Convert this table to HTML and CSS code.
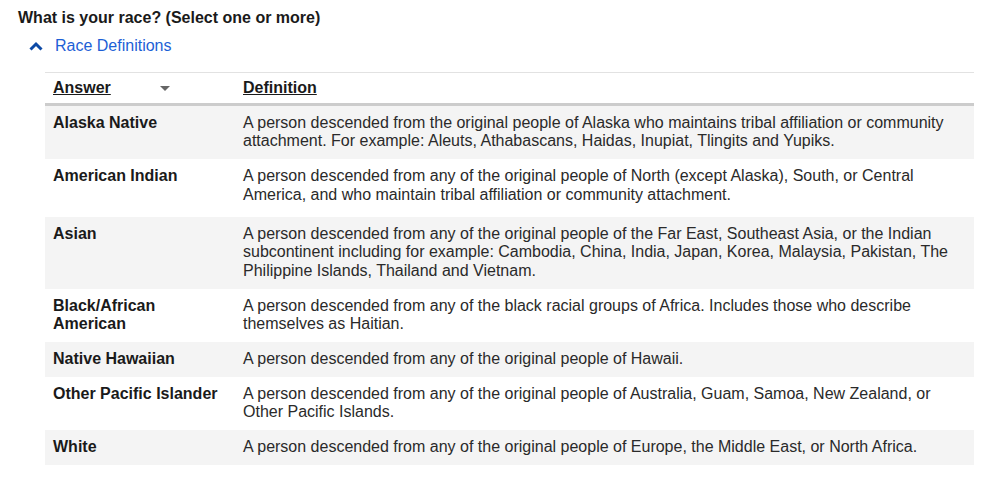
FILE: index.html
```html
<!DOCTYPE html>
<html>
<head>
<meta charset="utf-8">
<link rel="stylesheet" href="styles.css">
</head>
<body>
<div class="page">
  <h1 class="question">What is your race? (Select one or more)</h1>
  <a class="toggle" href="#">
    <svg class="chev" width="14" height="10" viewBox="0 0 14 10"><path d="M1.5 8.5 L7 3 L12.5 8.5" fill="none" stroke="#0d4aa6" stroke-width="3"/></svg>
    <span>Race Definitions</span>
  </a>
  <table class="defs">
    <thead>
      <tr>
        <th class="col-answer"><span class="hd">Answer</span><span class="sort"></span></th>
        <th class="col-def"><span class="hd">Definition</span></th>
      </tr>
    </thead>
    <tbody>
      <tr class="alt"><td class="name">Alaska Native</td><td>A person descended from the original people of Alaska who maintains tribal affiliation or community attachment. For example: Aleuts, Athabascans, Haidas, Inupiat, Tlingits and Yupiks.</td></tr>
      <tr class="tall"><td class="name">American Indian</td><td>A person descended from any of the original people of North (except Alaska), South, or Central America, and who maintain tribal affiliation or community attachment.</td></tr>
      <tr class="alt"><td class="name">Asian</td><td>A person descended from any of the original people of the Far East, Southeast Asia, or the Indian subcontinent including for example: Cambodia, China, India, Japan, Korea, Malaysia, Pakistan, The Philippine Islands, Thailand and Vietnam.</td></tr>
      <tr><td class="name">Black/African American</td><td>A person descended from any of the black racial groups of Africa. Includes those who describe themselves as Haitian.</td></tr>
      <tr class="alt"><td class="name">Native Hawaiian</td><td>A person descended from any of the original people of Hawaii.</td></tr>
      <tr><td class="name">Other Pacific Islander</td><td>A person descended from any of the original people of Australia, Guam, Samoa, New Zealand, or Other Pacific Islands.</td></tr>
      <tr class="alt"><td class="name">White</td><td>A person descended from any of the original people of Europe, the Middle East, or North Africa.</td></tr>
    </tbody>
  </table>
</div>
</body>
</html>
```
FILE: styles.css
```css
html, body {
  margin: 0;
  padding: 0;
  background: #fff;
}
body {
  font-family: "Liberation Sans", Arial, sans-serif;
  color: #222;
  font-size: 16px;
}
.page {
  padding: 9px 16px 0 18px;
}
.question {
  margin: 0;
  font-size: 16px;
  font-weight: bold;
  line-height: 18.4px;
  color: #1a1a1a;
}
.toggle {
  display: flex;
  align-items: center;
  gap: 12px;
  margin: 10px 0 0 11px;
  color: #1d5fd6;
  text-decoration: none;
  font-size: 16px;
  line-height: 18.4px;
}
.chev {
  display: block;
  margin-top: -1px;
}
.defs {
  margin: 16px 0 0 27px;
  width: 929px;
  border-collapse: collapse;
  border-top: 1px solid #e2e2e2;
}
.defs th {
  text-align: left;
  font-weight: bold;
  padding: 5px 8px 6px;
  height: 19px;
  line-height: 19px;
  border-bottom: 3px solid #cccccc;
  vertical-align: middle;
}
.hd {
  text-decoration: underline;
  color: #1a1a1a;
}
.col-answer {
  width: 174px;
  position: relative;
}
.sort {
  position: absolute;
  left: 115px;
  top: 13px;
  width: 0;
  height: 0;
  border-left: 5px solid transparent;
  border-right: 5px solid transparent;
  border-top: 5px solid #666;
}
.defs td {
  padding: 8px 8px 8.5px;
  line-height: 18.4px;
  vertical-align: top;
  color: #2a2a2a;
}
.defs td.name {
  font-weight: bold;
  color: #1a1a1a;
}
.defs tr.alt td {
  background: #f4f4f4;
}
.defs tr.tall td {
  padding-bottom: 13px;
}
```
